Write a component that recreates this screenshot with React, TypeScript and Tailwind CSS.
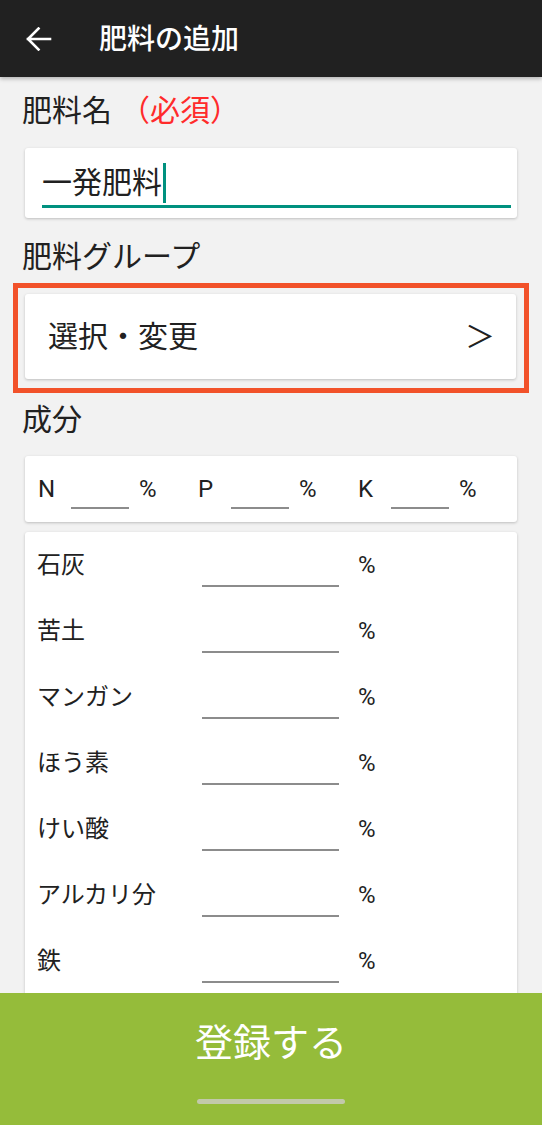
const font = { fontFamily: 'Roboto, "Noto Sans CJK JP", sans-serif' };

const elements = ["石灰", "苦土", "マンガン", "ほう素", "けい酸", "アルカリ分", "鉄"];

const BackIcon = () => (
  <svg width="26" height="24" viewBox="0 0 26 24" fill="none">
    <path
      d="M2 12H24M12.5 1.5L2 12L12.5 22.5"
      stroke="white"
      strokeWidth="2.6"
      strokeLinecap="square"
    />
  </svg>
);

const Card = ({ className = "", children }: { className?: string; children: React.ReactNode }) => (
  <div className={`rounded-[3px] bg-white shadow-[0_1px_3px_rgba(0,0,0,0.22)] ${className}`}>
    {children}
  </div>
);

const Label = ({ children, className = "" }: { children: React.ReactNode; className?: string }) => (
  <div className={`h-[34px] pl-[22px] text-[30px] leading-[34px] text-[#212121] ${className}`}>
    {children}
  </div>
);

const App = () => {
  return (
    <div className="flex h-screen flex-col overflow-hidden bg-[#f2f2f2]" style={font}>
      {/* App bar */}
      <header className="relative z-10 flex h-[77px] shrink-0 items-center bg-[#212121] shadow-[0_2px_4px_rgba(0,0,0,0.25)]">
        <div className="ml-[26px] mt-[1px] flex">
          <BackIcon />
        </div>
        <h1 className="ml-[47px] mt-[3px] text-[28px] font-medium leading-[34px] text-white">
          肥料の追加
        </h1>
      </header>

      <main className="flex-1 overflow-hidden">
        <Label className="mt-[17px]">
          肥料名<span className="ml-[8px] text-[#ff2b2b]">（必須）</span>
        </Label>

        <Card className="mx-[25px] mt-[20px] h-[70px] pt-[12px]">
          <div className="ml-[17px] mr-[6px] flex h-[48px] items-center border-b-[3px] border-[#00917f]">
            <span className="text-[30px] leading-[40px] text-[#212121]">一発肥料</span>
            <span className="ml-[1px] h-[40px] w-[3px] bg-[#00917f]" />
          </div>
        </Card>

        <Label className="mt-[22px]">肥料グループ</Label>

        {/* group picker */}
        <div className="mx-[13px] mt-[9px] border-[5px] border-[#f2522a] pb-[9px] pl-[7px] pr-[8px] pt-[6px]">
          <Card className="flex h-[85px] items-center justify-between pl-[23px] pr-[21px]">
            <span className="text-[30px] leading-[40px] text-[#212121]">選択・変更</span>
            <span className="text-[30px] leading-[40px] text-[#212121]">＞</span>
          </Card>
        </div>

        <Label className="mt-[10px]">成分</Label>

        {/* N / P / K */}
        <Card className="mx-[25px] mt-[19px] flex h-[66px] items-center pl-[12px]">
          {["N", "P", "K"].map((k) => (
            <div key={k} className="flex w-[160px] items-center text-[24px] text-[#212121]">
              <span className="w-[34px] pl-[1px]">{k}</span>
              <div className="h-[40px] w-[58px] border-b-2 border-[#8c8c8c]" />
              <span className="ml-[10px]">%</span>
            </div>
          ))}
        </Card>

        {/* other elements */}
        <Card className="mx-[25px] mt-[10px] pb-[30px]">
          {elements.map((name) => (
            <div key={name} className="flex h-[66px] items-center pl-[12px] text-[24px] text-[#212121]">
              <span className="w-[165px] leading-[30px]">{name}</span>
              <div className="h-[44px] w-[137px] border-b-2 border-[#8c8c8c]" />
              <span className="ml-[19px] leading-[30px]">%</span>
            </div>
          ))}
        </Card>
      </main>

      {/* submit */}
      <footer className="flex h-[132px] shrink-0 flex-col items-center bg-[#95bc3a] pt-[25px]">
        <button className="h-[50px] text-[38px] leading-[50px] text-white">登録する</button>
        <div className="mt-[31px] h-[5px] w-[148px] rounded-full bg-[#c2c9aa]" />
      </footer>
    </div>
  );
};

export default App;
